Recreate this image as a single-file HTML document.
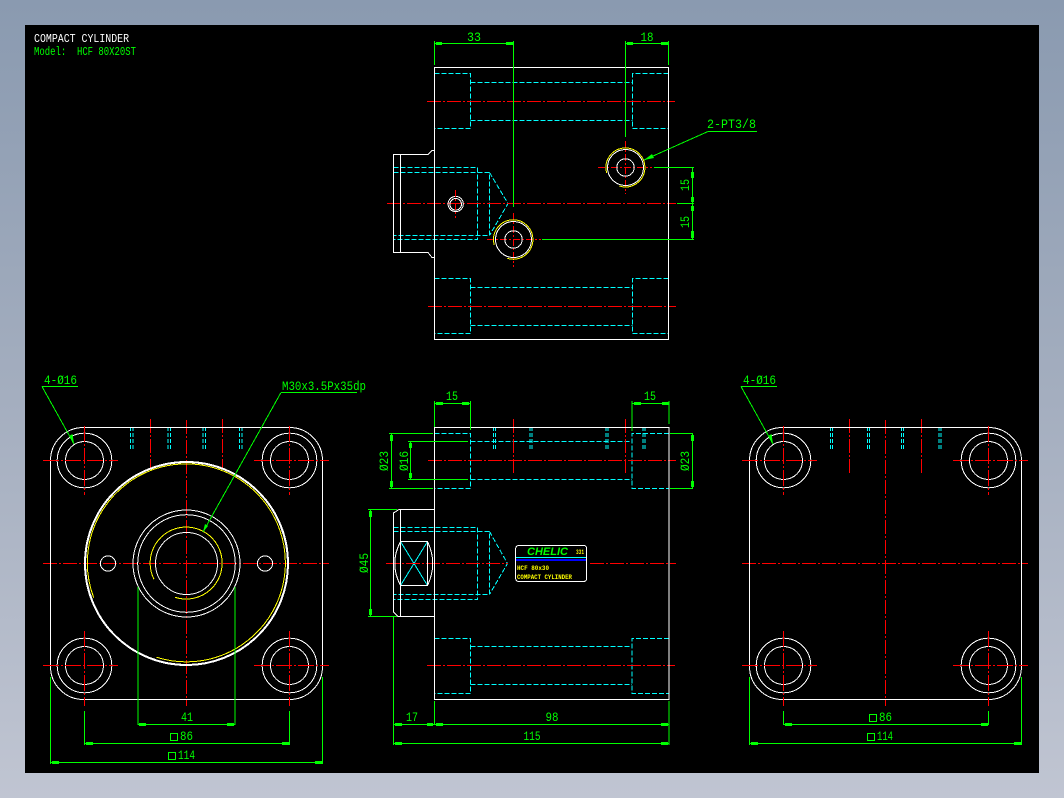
<!DOCTYPE html>
<html><head><meta charset="utf-8"><title>HCF 80X20ST</title>
<style>
html,body{margin:0;padding:0;width:1064px;height:798px;overflow:hidden;background:linear-gradient(180deg,#8a9ab0 0%,#a4aebf 50%,#c0c5d2 100%)}
#v{position:absolute;left:25px;top:25px;width:1014px;height:748px;background:#000}
svg{position:absolute;left:0;top:0}
.s{fill:none;shape-rendering:crispEdges;stroke-width:1}
.w{stroke:#fff}.c{stroke:#0ff;stroke-dasharray:5 2}.r{stroke:#f00;stroke-dasharray:14 2 2 2}.g{stroke:#0f0}.y{stroke:#ff0}
.a{stroke:#0f0;stroke-width:3}
text{font-family:"Liberation Mono","DejaVu Sans Mono",monospace;font-size:12.5px;fill:#0f0;white-space:pre}
.t{font-size:12px}
</style></head><body>
<div id="v"></div>
<svg width="1064" height="798" viewBox="0 0 1064 798">
<!-- TOP VIEW -->
<path class="s c" d="M434.5 73.5H470.5V128.5H434.5M470.5 82.5H632.5M470.5 120.5H632.5M668.5 73.5H632.5V128.5H668.5"/>
<path class="s c" d="M434.5 278.5H470.5V333.5H434.5M470.5 287.5H632.5M470.5 325.5H632.5M668.5 278.5H632.5V333.5H668.5"/>
<path class="s c" d="M393.5 167.5H477.5V239.5H393.5M393.5 172.5H489.5V235.5H393.5M489.5 172.5L508 203.5L489.5 235.5"/>
<path class="s r" d="M427 101.5H675M428 306.5H676M387 203.5H676"/>
<path class="s w" d="M434.5 67.5H668.5V339.5H434.5ZM434 150.5H432L428 154.5H393.5V252.5H428L432 257.5H434M400.5 154.5V252.5"/>
<circle class="s w" cx="455.7" cy="204" r="7.6"/><circle class="s w" cx="455.7" cy="204.3" r="5.8"/>
<path class="s r" style="stroke-dasharray:7 2 2 2" d="M455.5 190V218M598 167.5H652M625.5 141V194M487 239.5H541M513.5 213V267"/>
<circle class="s w" cx="625.5" cy="167.5" r="18"/><circle class="s w" cx="625.5" cy="167.5" r="8.7"/>
<circle class="s w" cx="513.5" cy="239.5" r="18"/><circle class="s w" cx="513.5" cy="239.5" r="8.7"/>
<path class="s y" d="M606.7 173A19.5 19.5 0 1 1 619.3 186M494.3 245A19.7 19.7 0 1 1 507.3 258.3"/>
<path class="s g" d="M434.5 43.5H513.5M434.5 41V65M513.5 41V207M625.5 43.5H668.5M625.5 41V137M668.5 41V65M708 131.5H757M708 131.5L644 160M654 167.5H694M677 203.5H694M542 239.5H694M692.5 167.5V239.5"/>
<path class="s a" d="M436 43.5h6M506 43.5h7M627 43.5h6M661 43.5h7M692.5 172v6M692.5 197v5M692.5 206v5M692.5 231v7"/>
<path fill="#0f0" d="M644 160L652 154L654 158Z"/>
<text x="474" y="41" text-anchor="middle" textLength="14" lengthAdjust="spacingAndGlyphs">33</text>
<text x="647" y="41" text-anchor="middle" textLength="13" lengthAdjust="spacingAndGlyphs">18</text>
<text x="707" y="128" textLength="49" lengthAdjust="spacingAndGlyphs">2-PT3/8</text>
<text transform="rotate(-90 689 185)" x="689" y="185" text-anchor="middle" textLength="12" lengthAdjust="spacingAndGlyphs">15</text>
<text transform="rotate(-90 689 222)" x="689" y="222" text-anchor="middle" textLength="12" lengthAdjust="spacingAndGlyphs">15</text>

<!-- LEFT VIEW -->
<path class="s c" style="stroke-dasharray:4 2" d="M130.5 427V451M133 427V451M168 427V451M170.5 427V451M203 427V451M205.5 427V451M239.5 427V451M242 427V451"/>
<path class="s r" d="M43 563.5H329M186.5 420V706"/>
<path class="s r" style="stroke-dasharray:14 2 2 2" d="M150.5 419V468M222.5 419V468"/>
<rect class="s w" x="50.5" y="427.5" width="272" height="272" rx="33" ry="33"/>
<circle class="s w" cx="186.5" cy="563.5" r="102"/><circle class="s w" cx="186.5" cy="563.5" r="101"/>
<circle class="s w" cx="186.5" cy="563.5" r="53.5"/><circle class="s w" cx="186.5" cy="563.5" r="48.8"/>
<circle class="s w" cx="186.5" cy="563.5" r="31"/>
<circle class="s w" cx="108" cy="563.5" r="7.6"/><circle class="s w" cx="265" cy="563.5" r="7.6"/>
<path class="s y" d="M93.7 597.7A99 99 0 1 1 156.7 657.3M154 579.3A36 36 0 1 1 175 597.3"/>
<g class="s w">
<circle cx="84.5" cy="460.5" r="27.3"/><circle cx="84.5" cy="460.5" r="19"/>
<circle cx="289.5" cy="460.5" r="27.3"/><circle cx="289.5" cy="460.5" r="19"/>
<circle cx="84.5" cy="665.5" r="27.3"/><circle cx="84.5" cy="665.5" r="19"/>
<circle cx="289.5" cy="665.5" r="27.3"/><circle cx="289.5" cy="665.5" r="19"/>
</g>
<path class="s r" style="stroke-dasharray:16 2 2 2" d="M43 460.5H118M254 460.5H329M43 665.5H118M254 665.5H329M84.5 426V495M289.5 426V495M84.5 631V706M289.5 631V706"/>
<path class="s g" d="M138 587V725M235 587V725M138 724.5H235M84.5 711V745M289.5 711V745M84.5 743.5H289.5M50.5 677V764M322.5 677V764M50.5 762.5H322.5M42 386.5H78M42 386.5L74 444M281 392.5H357M281 392.5L203 532"/>
<path class="s a" d="M139 724.5h7M227 724.5h7M86 743.5h7M282 743.5h7M52 762.5h7M315 762.5h7"/>
<path fill="#0f0" d="M74 444L69 436L72.5 434Z"/><path fill="#0f0" d="M203 532L205 524L208 526Z"/>
<text x="187" y="721" text-anchor="middle" textLength="12" lengthAdjust="spacingAndGlyphs">41</text>
<rect class="s g" x="170.5" y="733.5" width="7" height="7"/>
<text x="180" y="740" textLength="13" lengthAdjust="spacingAndGlyphs">86</text>
<rect class="s g" x="168.5" y="752.5" width="7" height="7"/>
<text x="178" y="759" textLength="17" lengthAdjust="spacingAndGlyphs">114</text>
<text x="44" y="384" textLength="33" lengthAdjust="spacingAndGlyphs">4-Ø16</text>
<text x="282" y="390" textLength="84" lengthAdjust="spacingAndGlyphs">M30x3.5Px35dp</text>

<!-- MIDDLE VIEW -->
<path class="s c" d="M434.5 433.5H470.5V488.5H434.5M470.5 441.5H632M470.5 479.5H632M669 433.5H632V488.5H669"/>
<path class="s c" d="M434.5 638.5H470.5V693.5H434.5M470.5 646.5H632M470.5 684.5H632M669 638.5H632V693.5H669"/>
<path class="s c" style="stroke-dasharray:4 2" d="M493.5 427V451M495.5 427V451M530 427V451M532 427V451M606 427V451M608 427V451M643 427V451M645 427V451"/>
<path class="s c" d="M393.5 527.5H477.5V599.5H393.5M393.5 531.5H489.5V594.5H393.5M489.5 531.5L507.5 563.5L489.5 594.5"/>
<path class="s c" style="stroke-dasharray:none" d="M400.5 541.5L427.5 585.5M427.5 541.5L400.5 585.5"/>
<path class="s r" d="M428 460.5H676M427 665.5H675M386 563.5H508M590 563.5H676"/>
<path class="s r" style="stroke-dasharray:14 2 2 2" d="M513.5 419V473M625.5 419V473"/>
<path class="s w" d="M434.5 427.5H669V699.5H434.5ZM434.5 509.5H399L393.5 513V612L398 616.5H434.5M400.5 509.5V616.5M400.5 541.5H427.5V585.5H400.5M400.5 541.5Q389 563.5 400.5 585.5M427.5 541.5Q438 563.5 427.5 585.5"/>
<rect class="s w" x="515.7" y="545.5" width="71" height="36" rx="3" ry="3"/>
<path class="s" stroke="#0ff" d="M516 557.5H586"/>
<rect x="516" y="559" width="70" height="2" fill="#00f" shape-rendering="crispEdges"/>
<text x="527" y="555" textLength="41" lengthAdjust="spacingAndGlyphs" style="font-family:'Liberation Sans',sans-serif;font-weight:bold;font-style:italic;font-size:11px">CHELIC</text>
<text x="576" y="554" textLength="8" lengthAdjust="spacingAndGlyphs" style="font-size:6px;fill:#ff0;font-weight:bold">331</text>
<text x="517" y="570" textLength="32" lengthAdjust="spacingAndGlyphs" style="font-size:6.5px;fill:#ff0;font-weight:bold">HCF 80x30</text>
<text x="517" y="579" textLength="55" lengthAdjust="spacingAndGlyphs" style="font-size:6.5px;fill:#ff0;font-weight:bold">COMPACT CYLINDER</text>
<path class="s g" d="M434.5 403.5H470.5M434.5 401V427M470.5 401V430M632 403.5H669M632 401V431M669 401V424M391.5 433.5V488.5M389 433.5H433M389 488.5H433M410.5 441.5V479.5M408 441.5H468M408 479.5H468M692.5 433.5V488.5M670 433.5H693M670 488.5H693M370.5 509.5V616.5M368 509.5H397M368 616.5H397M393.5 616V745M434.5 701V725M669 701V745M393.5 724.5H669M393.5 743.5H669"/>
<path class="s a" d="M436 403.5h7M462 403.5h7M634 403.5h7M662 403.5h7M391.5 435v6M391.5 481v6M410.5 443v5M410.5 473v5M692.5 435v6M692.5 481v6M370.5 511v6M370.5 609v6M395 724.5h7M427 724.5h6M436 724.5h7M661 724.5h7M395 743.5h7M661 743.5h7"/>
<text x="452" y="400" text-anchor="middle" textLength="12" lengthAdjust="spacingAndGlyphs">15</text>
<text x="650" y="400" text-anchor="middle" textLength="12" lengthAdjust="spacingAndGlyphs">15</text>
<text transform="rotate(-90 388 461)" x="388" y="461" text-anchor="middle" textLength="20" lengthAdjust="spacingAndGlyphs">Ø23</text>
<text transform="rotate(-90 408 461)" x="408" y="461" text-anchor="middle" textLength="20" lengthAdjust="spacingAndGlyphs">Ø16</text>
<text transform="rotate(-90 689 461)" x="689" y="461" text-anchor="middle" textLength="20" lengthAdjust="spacingAndGlyphs">Ø23</text>
<text transform="rotate(-90 368 563)" x="368" y="563" text-anchor="middle" textLength="20" lengthAdjust="spacingAndGlyphs">Ø45</text>
<text x="412" y="721" text-anchor="middle" textLength="12" lengthAdjust="spacingAndGlyphs">17</text>
<text x="552" y="721" text-anchor="middle" textLength="13" lengthAdjust="spacingAndGlyphs">98</text>
<text x="532" y="740" text-anchor="middle" textLength="17" lengthAdjust="spacingAndGlyphs">115</text>

<!-- RIGHT VIEW -->
<path class="s c" style="stroke-dasharray:4 2" d="M830.5 427V451M832.5 427V451M867.5 427V451M869.5 427V451M901.5 427V451M903.5 427V451M939 427V451M941 427V451"/>
<path class="s r" d="M742 563.5H1028M885.5 420V706M849.5 419V473M921.5 419V473"/>
<rect class="s w" x="749.5" y="427.5" width="272" height="272" rx="33" ry="33"/>
<g class="s w">
<circle cx="783.5" cy="460.5" r="27.3"/><circle cx="783.5" cy="460.5" r="19"/>
<circle cx="988.5" cy="460.5" r="27.3"/><circle cx="988.5" cy="460.5" r="19"/>
<circle cx="783.5" cy="665.5" r="27.3"/><circle cx="783.5" cy="665.5" r="19"/>
<circle cx="988.5" cy="665.5" r="27.3"/><circle cx="988.5" cy="665.5" r="19"/>
</g>
<path class="s r" style="stroke-dasharray:16 2 2 2" d="M742 460.5H817M953 460.5H1028M742 665.5H817M953 665.5H1028M783.5 426V495M988.5 426V495M783.5 631V706M988.5 631V706"/>
<path class="s g" d="M783.5 711V725M988.5 711V725M783.5 724.5H988.5M749.5 677V745M1021.5 677V745M749.5 743.5H1021.5M741 386.5H777M741 386.5L773 444"/>
<path class="s a" d="M785 724.5h7M981 724.5h7M751 743.5h7M1014 743.5h7"/>
<path fill="#0f0" d="M773 444L768 436L771.5 434Z"/>
<rect class="s g" x="869.5" y="714.5" width="7" height="7"/>
<text x="879" y="721" textLength="13" lengthAdjust="spacingAndGlyphs">86</text>
<rect class="s g" x="867.5" y="733.5" width="7" height="7"/>
<text x="877" y="740" textLength="16" lengthAdjust="spacingAndGlyphs">114</text>
<text x="743" y="384" textLength="33" lengthAdjust="spacingAndGlyphs">4-Ø16</text>

<!-- TITLE -->
<text class="t" x="34" y="42" textLength="95" lengthAdjust="spacingAndGlyphs" style="fill:#fff">COMPACT CYLINDER</text>
<text class="t" x="34" y="55" textLength="102" lengthAdjust="spacingAndGlyphs">Model:  HCF 80X20ST</text>
</svg>
</body></html>
